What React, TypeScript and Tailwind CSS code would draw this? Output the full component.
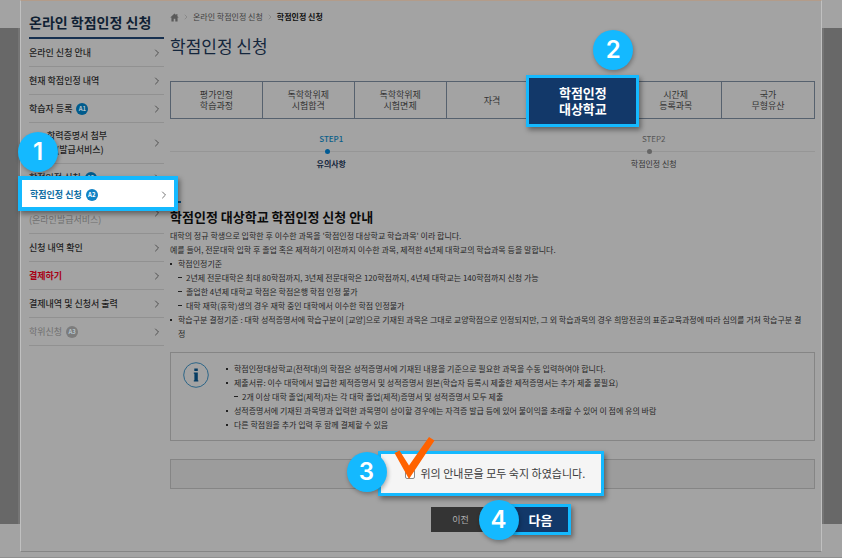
import { useState } from 'react';
import type { ReactNode } from 'react';
import clsx from 'clsx';
import { ChevronRight } from 'lucide-react';

interface MenuItem {
  label: string;
  badge?: string;
  tone?: 'red' | 'muted';
}

const menuTop: MenuItem[] = [
  { label: '온라인 신청 안내' },
  { label: '현재 학점인정 내역' },
  { label: '학습자 등록', badge: 'A1' },
];

const menuBottom: MenuItem[] = [
  { label: '신청 내역 확인' },
  { label: '결제하기', tone: 'red' },
  { label: '결제내역 및 신청서 출력' },
  { label: '학위신청', badge: 'A3', tone: 'muted' },
];

const tabs = [
  ['평가인정', '학습과정'],
  ['독학학위제', '시험합격'],
  ['독학학위제', '시험면제'],
  ['자격'],
  ['학점인정', '대상학교'],
  ['시간제', '등록과목'],
  ['국가', '무형유산'],
];

const StepNumber = ({ children, className }: { children: ReactNode; className: string }) => (
  <span
    className={clsx(
      'absolute z-20 flex size-10 items-center justify-center rounded-full bg-[#14b9ff] font-[Inter,sans-serif] text-2xl font-semibold text-white shadow-[1px_2px_4px_rgba(0,0,0,0.3)]',
      className
    )}
  >
    {children}
  </span>
);

const MenuArrow = () => <ChevronRight className="mr-px size-3 text-[#4f4f4f]" strokeWidth={2} />;

const MenuRow = ({ label, badge, tone }: MenuItem) => (
  <a
    href="#"
    className={clsx(
      'flex h-7 items-center justify-between border-b border-[#919191] text-[9px] leading-[14px]',
      tone === 'red' && 'font-bold text-[#a80014]',
      tone === 'muted' && 'text-[#6f6f6f]',
      !tone && 'font-medium text-[#1f1f1f]'
    )}
  >
    <span className="flex items-center gap-1">
      {label}
      {badge && (
        <span
          className={clsx(
            'flex size-3 items-center justify-center rounded-full text-[6px] font-bold text-[#b5c4cc]',
            tone === 'muted' ? 'bg-[#7c7c7c]' : 'bg-[#005b8c]'
          )}
        >
          {badge}
        </span>
      )}
    </span>
    <MenuArrow />
  </a>
);

const Sidebar = () => (
  <aside className="w-[135px] shrink-0 pt-2.5">
    <h2 className="h-7 border-b-2 border-[#17304f] text-sm leading-[22px] font-bold whitespace-nowrap text-[#0f1f33]">
      온라인 학점인정 신청
    </h2>
    <nav>
      <ul>
        {menuTop.map((item) => (
          <li key={item.label}>
            <MenuRow {...item} />
          </li>
        ))}
        <li>
          <a
            href="#"
            className="flex h-[41px] items-center justify-between border-b border-[#919191] text-[9px] leading-[14px] font-medium text-[#1f1f1f]"
          >
            <span className="pl-[18px]">
              <span className="block">학력증명서 첨부</span>
              <span className="block pl-[9px]">(발급서비스)</span>
            </span>
            <MenuArrow />
          </a>
        </li>
        <li className="relative">
          <MenuRow label="학점인정 신청" badge="A2" />
          <a
            href="#"
            aria-current="page"
            className="absolute top-3 -left-[11px] z-10 flex h-[35px] w-40 items-center border-4 border-[#14b9ff] bg-white pt-0.5 pr-1 pl-2 text-[9px] font-bold text-[#0f6ea3] shadow-[2px_3px_5px_rgba(0,0,0,0.4)]"
          >
            학점인정 신청
            <span className="ml-1 flex size-3 items-center justify-center rounded-full bg-[#1182c4] text-[6px] text-white">
              A2
            </span>
            <ChevronRight className="ml-auto size-3 text-[#777]" strokeWidth={2} />
          </a>
          <StepNumber className="-top-8 -left-[11px]">1</StepNumber>
        </li>
        <li>
          <a
            href="#"
            className="flex h-[42px] items-center justify-between border-b border-[#919191] text-[9px] leading-[14px] text-[#6f6f6f]"
          >
            <span className="pt-3.5">(온라인발급서비스)</span>
            <MenuArrow />
          </a>
        </li>
        {menuBottom.map((item) => (
          <li key={item.label}>
            <MenuRow {...item} />
          </li>
        ))}
      </ul>
    </nav>
  </aside>
);

const Breadcrumb = () => (
  <nav className="flex h-3.5 items-center gap-[3px] text-[8px] text-[#3f3f3f]">
    <a href="#" aria-label="홈">
      <svg viewBox="0 0 10 10" className="size-[9px] fill-[#5a5a5a]">
        <path d="M5 0.5 0.3 5h1.3v4.5h2.5V6.4h1.8v3.1h2.5V5h1.3L8.2 3.5V1.2H7v1.2z" />
      </svg>
    </a>
    <ChevronRight className="size-2 text-[#7d7d7d]" />
    <a href="#">온라인 학점인정 신청</a>
    <ChevronRight className="size-2 text-[#7d7d7d]" />
    <strong className="font-bold text-[#111]">학점인정 신청</strong>
  </nav>
);

const Tabs = () => (
  <ul className="mt-[23px] grid h-[38px] grid-cols-7 border border-[#56616e]">
    {tabs.map((lines, i) => (
      <li
        key={lines.join()}
        className={clsx('relative', i < tabs.length - 1 && 'border-r border-[#56616e]')}
      >
        {i === 4 ? (
          <>
            <button
              type="button"
              className="absolute -top-[7px] -right-2.5 -bottom-[9px] -left-3 z-10 border-[3px] border-[#14b9ff] bg-[#123869] text-[13px] leading-4 font-bold text-white shadow-[2px_3px_5px_rgba(0,0,0,0.4)]"
            >
              {lines.map((line) => (
                <span key={line} className="block">
                  {line}
                </span>
              ))}
            </button>
            <StepNumber className="-top-[52px] -right-1">2</StepNumber>
          </>
        ) : (
          <button type="button" className="size-full text-[9px] leading-[11px] text-[#333]">
            {lines.map((line) => (
              <span key={line} className="block">
                {line}
              </span>
            ))}
          </button>
        )}
      </li>
    ))}
  </ul>
);

const Step = ({ name, label, active }: { name: string; label: string; active?: boolean }) => (
  <li className="text-center text-[8px] leading-[10px]">
    <p className={active ? 'font-medium text-[#0b5f8a]' : 'text-[#555]'}>{name}</p>
    <div className="flex h-[15px] items-center">
      <span className="h-px flex-1 bg-[#969696]" />
      <span className={clsx('size-[5px] rounded-full', active ? 'bg-[#005b94]' : 'bg-[#666]')} />
      <span className="h-px flex-1 bg-[#969696]" />
      <span className="h-px w-2 bg-[#969696]" />
    </div>
    <p className={active ? 'font-bold text-[#14263c]' : 'text-[#333]'}>{label}</p>
  </li>
);

const Bullet = ({ children }: { children: ReactNode }) => (
  <li className="relative pl-2 before:absolute before:top-1.5 before:left-0 before:size-0.5 before:bg-[#222]">
    {children}
  </li>
);

const Dash = ({ children }: { children: ReactNode }) => (
  <li className="relative pl-2 before:absolute before:top-1.5 before:left-0 before:h-px before:w-1 before:bg-[#222]">
    {children}
  </li>
);

const Guide = () => (
  <section>
    <div className="mt-8 h-0.5 w-[11px] bg-[#0b4a75]" />
    <h2 className="mt-1 text-[13px] leading-5 font-bold text-[#0b0b0b]">
      학점인정 대상학교 학점인정 신청 안내
    </h2>
    <div className="mt-0.5 text-[8px] leading-[14px] text-[#262626]">
      <p>대학의 정규 학생으로 입학한 후 이수한 과목을 '학점인정 대상학교 학습과목' 이라 합니다.</p>
      <p>
        예를 들어, 전문대학 입학 후 졸업 혹은 제적하기 이전까지 이수한 과목, 제적한 4년제 대학교의
        학습과목 등을 말합니다.
      </p>
      <ul>
        <Bullet>
          학점인정기준
          <ul>
            <Dash>2년제 전문대학은 최대 80학점까지, 3년제 전문대학은 120학점까지, 4년제 대학교는 140학점까지 신청 가능</Dash>
            <Dash>졸업한 4년제 대학교 학점은 학점은행 학점 인정 불가</Dash>
            <Dash>대학 재학(휴학)생의 경우 재학 중인 대학에서 이수한 학점 인정불가</Dash>
          </ul>
        </Bullet>
        <Bullet>
          <p className="pr-2">
            학습구분 결정기준 : 대학 성적증명서에 학습구분이 [교양]으로 기재된 과목은 그대로
            교양학점으로 인정되지만, 그 외 학습과목의 경우 희망전공의 표준교육과정에 따라 심의를 거쳐
            학습구분 결정
          </p>
        </Bullet>
      </ul>
    </div>
  </section>
);

const InfoBox = () => (
  <section className="mt-[11px] flex gap-4 border border-[#858585] px-3 pt-[9px] pb-2">
    <svg viewBox="0 0 26 26" className="mr-px size-[26px] shrink-0" aria-hidden="true">
      <circle cx="13" cy="13" r="12.3" fill="none" stroke="#1f5f85" strokeWidth="0.9" />
      <path d="M11.300 6.500h3.500v2.600h-3.500zM10.800 10.600h4v7.700h.5v1.200h-4.500v-1.200h.6v-6.500h-.6z" fill="#063c63" />
    </svg>
    <ul className="text-[8px] leading-[14px] text-[#262626]">
      <Bullet>학점인정대상학교(전적대)의 학점은 성적증명서에 기재된 내용을 기준으로 필요한 과목을 수동 입력하여야 합니다.</Bullet>
      <Bullet>
        제출서류: 이수 대학에서 발급한 제적증명서 및 성적증명서 원본(학습자 등록시 제출한 제적증명서는 추가 제출 불필요)
        <ul>
          <Dash>2개 이상 대학 졸업(제적)자는 각 대학 졸업(제적)증명서 및 성적증명서 모두 제출</Dash>
        </ul>
      </Bullet>
      <Bullet>성적증명서에 기재된 과목명과 입력한 과목명이 상이할 경우에는 자격증 발급 등에 있어 불이익을 초래할 수 있어 이 점에 유의 바람</Bullet>
      <Bullet>다른 학점원을 추가 입력 후 함께 결제할 수 있음</Bullet>
    </ul>
  </section>
);

const Agreement = () => {
  const [agreed, setAgreed] = useState(false);

  return (
    <div className="relative mt-[18px] h-[30px] border border-[#858585] bg-[#9c9c9c]">
      <div className="absolute -top-[9px] left-1/2 z-10 -ml-[115px] flex h-[45px] w-[226px] items-center border-[3px] border-[#14b9ff] bg-[#f5f5f5] pl-6 shadow-[2px_3px_5px_rgba(0,0,0,0.4)]">
        <label className="flex items-center gap-1.5 text-[11px] whitespace-nowrap text-[#3c3c3c]">
          <input
            type="checkbox"
            checked={agreed}
            onChange={(e) => setAgreed(e.target.checked)}
            className="size-2.5 appearance-none rounded-xs border border-[#8a8a8a] bg-white checked:bg-[#14b9ff]"
          />
          위의 안내문을 모두 숙지 하였습니다.
        </label>
        <svg
          viewBox="0 0 42 44"
          className="pointer-events-none absolute -top-[18px] left-3 h-11 w-[42px]"
          aria-hidden="true"
        >
          <path d="M1.500 17 6.500 14.500 16 29.500 36 1 41.500 4.500 16 43z" fill="#ff6200" />
        </svg>
        <StepNumber className="-top-0.5 -left-[34px]">3</StepNumber>
      </div>
    </div>
  );
};

const App = () => {
  return (
    <div className="flex min-h-screen flex-col border-b border-[#8f8f8f] bg-[#a3a3a3] font-['Noto_Sans_CJK_KR',sans-serif]">
      <div className="flex">
        <div className="w-5 shrink-0 pt-7">
          <div className="h-[496px] border-r-2 border-[#757575] bg-[#686868]" />
        </div>
        <div className="flex min-w-0 flex-1 gap-1.5 border border-t-[#b39c8a] border-r-[#c0c0c0] border-b-[#858585] border-l-[#c0c0c0] pr-1.5 pl-2">
          <Sidebar />
          <main className="min-w-0 flex-1 pt-[9px] pb-[19px]">
            <Breadcrumb />
            <h1 className="mt-2.5 text-[17px] leading-6 text-[#14263c]">학점인정 신청</h1>
            <Tabs />
            <ol className="mt-[15px] grid grid-cols-2">
              <Step name="STEP1" label="유의사항" active />
              <Step name="STEP2" label="학점인정 신청" />
            </ol>
            <Guide />
            <InfoBox />
            <Agreement />
            <div className="mt-[18px] flex h-[25px] justify-center gap-1">
              <button type="button" className="w-[60px] bg-[#343434] text-[9px] text-[#b0b0b0]">
                이전
              </button>
              <div className="relative w-[60px]">
                <button
                  type="button"
                  className="absolute -top-[3px] -right-4 -bottom-[3px] left-4 border-[3px] border-[#14b9ff] bg-[#123869] text-[13px] leading-4 font-bold text-white shadow-[2px_3px_5px_rgba(0,0,0,0.4)]"
                >
                  다음
                </button>
                <StepNumber className="-top-[7px] -left-4">4</StepNumber>
              </div>
            </div>
          </main>
        </div>
        <div className="w-5 shrink-0 pt-7">
          <div className="h-[496px] border-l-2 border-[#757575] bg-[#686868]" />
        </div>
      </div>
    </div>
  );
};

export default App;
